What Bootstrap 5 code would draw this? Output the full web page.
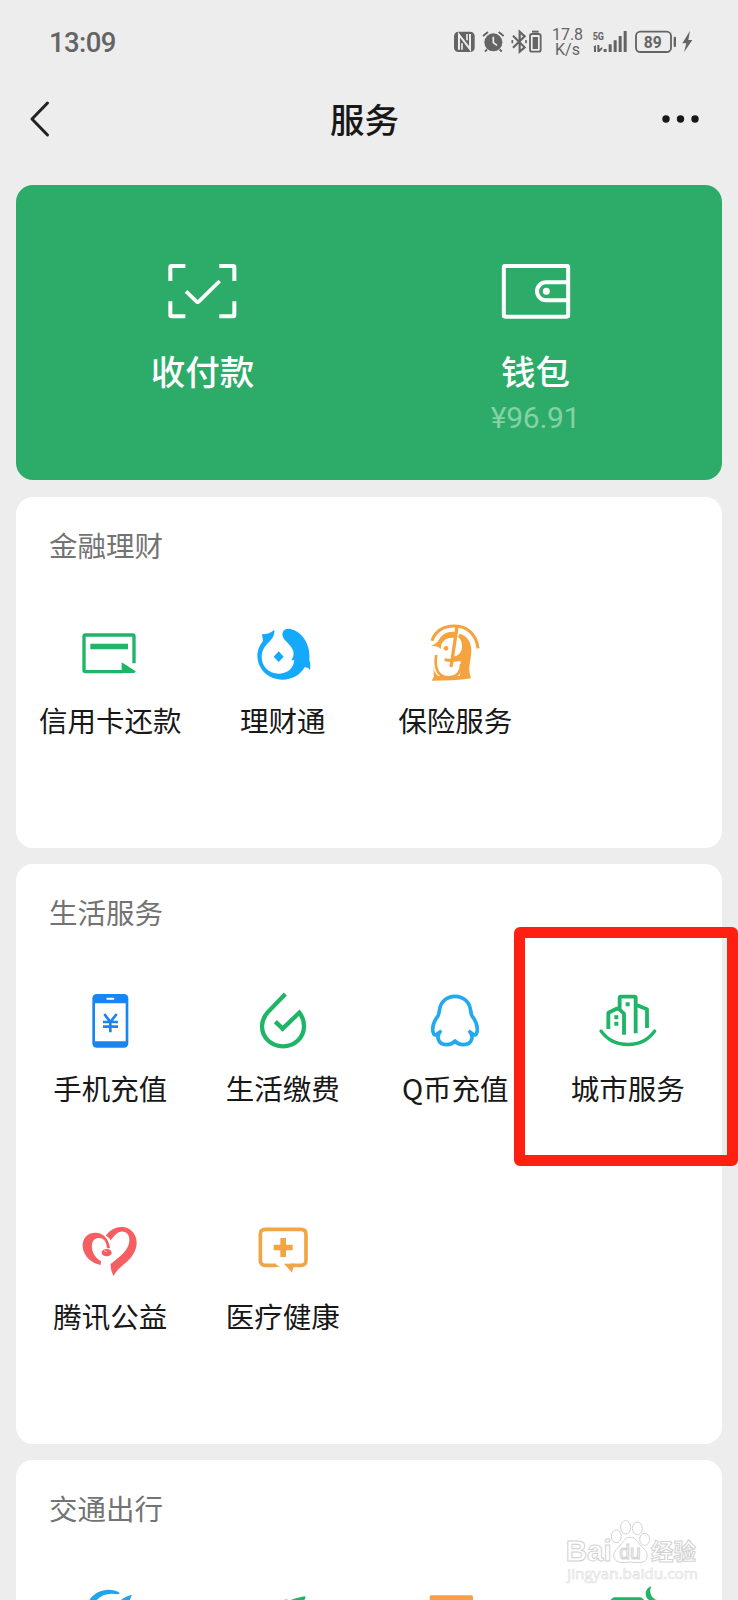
<!DOCTYPE html>
<html lang="zh-CN">
<head>
<meta charset="utf-8">
<meta name="viewport" content="width=device-width, initial-scale=1">
<title>服务</title>
<link href="https://cdn.jsdelivr.net/npm/bootstrap@5.3.0/dist/css/bootstrap.min.css" rel="stylesheet">
<style>
  html, body { height: 1600px; overflow: hidden; }
  body { background: #ededed; color: #181818; font-family: Roboto, "Noto Sans CJK SC", sans-serif; }
  svg { display: block; flex: none; }
  .status-bar { height: 84px; padding-left: 49px; color: #646464; }
  .clock { font-size: 27.5px; line-height: 84px; padding-top: 2px; width: 404px; letter-spacing: -.6px; }
  .net-speed { width: 33px; margin: 0 8px 0 9px; font-size: 16px; }
  .net-speed div { height: 15px; line-height: 15px; }
  .title-bar { height: 72px; padding: 0 38px 0 29px; }
  .title-bar h1 { font-size: 34.5px; line-height: 50px; font-weight: 500; padding-top: 1px; }
  .panel { border: 0; border-radius: 17px; margin: 0 16px 16px; }
  .pay-panel { height: 295px; margin-top: 29px; margin-bottom: 16.5px; background: #2dac69; color: #fff; padding: 79px 20px 0; }
  .cut-panel { height: 139.5px; overflow: hidden; }
  .pay-label { font-size: 34.5px; line-height: 50px; font-weight: 500; margin-top: 29px; }
  .amount { font-size: 30px; line-height: 36px; color: #84d1a6; margin-top: 2px; letter-spacing: -.3px; }
  .section-title { font-size: 28.5px; line-height: 42px; font-weight: 400; color: #737373; margin: 0; padding: 30px 33px 26px; }
  .tiles { padding: 0 8px 25px; }
  .tile { height: 228.5px; padding-top: 22.5px; }
  .tile-label { font-family: "Noto Sans CJK SC", sans-serif; font-size: 28.5px; line-height: 42px; margin-top: 10px; white-space: nowrap; }
  .highlight { left: 514px; top: 927px; width: 224px; height: 239px; border: 11.5px solid #ff2012; border-radius: 6px; }
  .watermark { left: 560px; top: 1515px; }
</style>
</head>
<body class="position-relative">

<header>
  <div class="status-bar d-flex align-items-center">
    <div class="clock fw-medium">13:09</div>
    <svg width="89" height="55" viewBox="39 0 267 165" fill="none" stroke="#646464">
      <rect x="42" y="50" width="62" height="61" rx="13" fill="#646464" stroke="none"/>
      <path d="M57 104V59L90 102V57" stroke="#ededed" stroke-width="6"/>
      <path d="M66 104V85M81 57V76" stroke="#ededed" stroke-width="5"/>
      <circle cx="160" cy="82" r="27" fill="#646464" stroke="none"/>
      <path d="M129 63l15-12M191 63l-15-12M141 103l-6 7M179 103l6 7" stroke-width="6"/>
      <path d="M160 65v18l11 8" stroke="#ededed" stroke-width="5"/>
      <path d="M219 62l35 35-15 13V50l15 14-35 34" stroke-width="6.500"/>
      <path d="M217 75v10M258 75v10" stroke-width="5"/>
      <rect x="270" y="57" width="32" height="53" rx="6" stroke-width="5.500"/>
      <path d="M276 50h20" stroke-width="6"/>
      <rect x="278" y="66" width="16" height="36" fill="#646464" stroke="none"/>
    </svg>
    <div class="net-speed text-center"><div>17.8</div><div>K/s</div></div>
    <svg width="35" height="55" viewBox="456 0 105 165" fill="#646464">
      <text x="458" y="76" font-family="Roboto" font-weight="700" font-size="34" textLength="34" lengthAdjust="spacingAndGlyphs">5G</text>
      <path d="M459 96l9-6v21h-6V97zM472 90h6v12l9-6v6l-9 9h-6z"/>
      <path d="M491 102h9v9h-9zM506 88h9v23h-9zM521 76h9v35h-9zM536 63h9v48h-9zM551 48h9v63h-9z"/>
    </svg>
    <svg class="ms-2" width="58" height="55" viewBox="583 0 174 165" fill="#646464">
      <rect x="586" y="50" width="105" height="61" rx="13" fill="none" stroke="#646464" stroke-width="5.500"/>
      <text x="636" y="98" text-anchor="middle" font-family="Roboto" font-weight="700" font-size="47">89</text>
      <rect x="699" y="65" width="7" height="31" rx="3"/>
      <path d="M748 47l-23 38h12l-7 27 25-37h-12z"/>
    </svg>
  </div>
  <nav class="title-bar d-flex align-items-center justify-content-between">
    <svg width="38" height="40" viewBox="0 0 38 40" fill="none" stroke="#222" stroke-width="3" stroke-linecap="round" stroke-linejoin="round"><path d="M18.500 3L3 19l15.500 16"/></svg>
    <h1 class="mb-0">服务</h1>
    <svg width="38" height="10" viewBox="0 0 38 10" fill="#181818"><circle cx="4" cy="4" r="3.700"/><circle cx="18.500" cy="4" r="3.700"/><circle cx="33" cy="4" r="3.700"/></svg>
  </nav>
</header>

<main>
  <section class="card panel pay-panel">
    <div class="row g-0 text-center">
      <div class="col-6 d-flex flex-column align-items-center">
        <svg width="70" height="55" viewBox="0 0 210 165" fill="none" stroke="#fff" stroke-width="12">
          <path d="M7 51V10q0-4 4-4h41M154 6h41q4 0 4 4v41M199 112v41q0 4-4 4h-41M52 157H11q-4 0-4-4v-41"/>
          <path d="M54 82l31 30q4 4 8 0l62-61" stroke-width="11"/>
        </svg>
        <div class="pay-label">收付款</div>
      </div>
      <div class="col-6 d-flex flex-column align-items-center">
        <svg width="70" height="55" viewBox="0 0 210 165" fill="none" stroke="#fff" stroke-width="12">
          <rect x="8.500" y="6" width="193" height="152" rx="4"/>
          <path d="M200 55h-65a27 27 0 0 0 0 54h65"/>
          <circle cx="136" cy="82" r="10.500" fill="#fff" stroke="none"/>
        </svg>
        <div class="pay-label">钱包</div>
        <div class="amount">¥96.91</div>
      </div>
    </div>
  </section>

  <section class="card panel">
    <h2 class="section-title">金融理财</h2>
    <div class="tiles row g-0">
      <div class="tile col-3 d-flex flex-column align-items-center">
        <svg width="72" height="72" viewBox="223 411 216 216" fill="#1fb566">
          <path d="M403 550V469q0-4-4-4H257q-4 0-4 4v102q0 4 4 4h112" fill="none" stroke="#1fb566" stroke-width="10"/>
          <path d="M272 491h113v17H272zM366 547l42 27q-1 5-6 5h-36z"/>
        </svg>
        <div class="tile-label">信用卡还款</div>
      </div>
      <div class="tile col-3 d-flex flex-column align-items-center">
        <svg width="72" height="72" viewBox="740 411 216 216" fill="#14a9fb">
          <path d="M822 449c-10 9-21 14-37 14l3 20c-11 14-17 28-17 43 0 42 33 73 75 73 29 0 53-13 67-37 7 0 12 2 16 8 2-11 1-22-2-30 5-50-26-91-63-94-12 0-20 9-17 22 4 16 23 22 31 43 4 12 1 20-5 31l9-3c-2 27-23 42-48 42-29 0-50-22-50-49 0-20 9-34 22-46 11-11 17-21 16-37z"/>
          <path d="M835 514l15 16-15 16-15-16z"/>
        </svg>
        <div class="tile-label">理财通</div>
      </div>
      <div class="tile col-3 d-flex flex-column align-items-center">
        <svg width="72" height="72" viewBox="2 0 216 216" fill="none" stroke="#f5a33f">
          <path d="M41 71c10-30 37-45 69-44 38 1 64 26 69 67" stroke-width="9.500"/>
          <path d="M38 86c11-3 19-9 25-19 9-16 26-25 47-22l-2 18c-14-3-25 1-32 9-7 8-9 15-8 24-8-7-17-10-30-10z" fill="#f5a33f" stroke="none"/>
          <path d="M124 50c25 7 35 28 35 51 0 22-9 46-5 68l4 15c-36 7-76 7-118 7l8-14h76c5-17 4-31 2-46-8 3-18 4-27 3l5-15c15-2 27-13 27-30 0-16-5-23-12-29z" fill="#f5a33f" stroke="none"/>
          <path d="M116 30L98 150" stroke-width="10"/>
          <path d="M45 144c1 26 14 38 34 39l-32 4z" fill="#f5a33f" stroke="none"/>
          <path d="M54 114c-6 32 0 65 35 67 25 0 39-14 39-40" stroke-width="8"/>
          <path d="M79 128l24 3" stroke-width="9"/>
          <circle cx="83" cy="94" r="7" fill="#f5a33f" stroke="none"/>
        </svg>
        <div class="tile-label">保险服务</div>
      </div>
    </div>
  </section>

  <section class="card panel">
    <h2 class="section-title">生活服务</h2>
    <div class="tiles row g-0">
      <div class="tile col-3 d-flex flex-column align-items-center">
        <svg width="72" height="72" viewBox="133 74 216 216">
          <rect x="188" y="101" width="108" height="161" rx="13" fill="#1a85ee"/>
          <path d="M196 129h92v114h-92z" fill="#fff"/>
          <rect x="230" y="112" width="24" height="6" rx="3" fill="#fff"/>
          <path d="M224 161l18 24 19-24M242 185v31M220 185h45M220 199h45" fill="none" stroke="#1a85ee" stroke-width="8"/>
        </svg>
        <div class="tile-label">手机充值</div>
      </div>
      <div class="tile col-3 d-flex flex-column align-items-center">
        <svg width="72" height="72" viewBox="650 74 216 216" fill="none" stroke="#1fb566" stroke-width="13">
          <path d="M765 101l-53 55c-11 13-17 25-17 41 0 35 28 61 63 61s63-26 63-61c0-16-5-29-14-40l-50 48-22-21"/>
        </svg>
        <div class="tile-label">生活缴费</div>
      </div>
      <div class="tile col-3 d-flex flex-column align-items-center">
        <svg width="72" height="72" viewBox="148 224 216 216" fill="none" stroke="#22a9ee" stroke-width="11" stroke-linejoin="round">
          <path d="M256 258c-27 0-45 19-47 44l-3 13c-13 17-19 35-16 50 2 9 6 11 12 7l8-6c-5 8-7 14-4 21 3 11 13 16 25 16 11 0 19-4 25-11 6 7 14 11 25 11 12 0 22-5 25-16 3-7 1-13-4-21l8 6c6 4 10 2 12-7 3-15-3-33-16-50l-3-13c-2-25-20-44-47-44z"/>
          <path d="M202 373l13-12M310 373l-13-12" stroke-width="9"/>
        </svg>
        <div class="tile-label">Q币充值</div>
      </div>
      <div class="tile col-3 d-flex flex-column align-items-center">
        <svg width="72" height="72" viewBox="665 224 216 216" fill="none" stroke="#1fb566" stroke-width="11.500" stroke-linejoin="round">
          <path d="M714 356v-49l25-12q4-1 8 2l14 13v63M748 296v-33q0-4 4-4h40q4 0 4 4v106M799 284l31 13v56"/>
          <path d="M692 362c39 54 123 54 161 0" stroke-linecap="round" stroke-width="10"/>
          <path d="M732 315h12v12h-12zM732 334h12v12h-12zM766 276h12v12h-12z" fill="#1fb566" stroke="none"/>
        </svg>
        <div class="tile-label">城市服务</div>
      </div>
      <div class="tile col-3 d-flex flex-column align-items-center">
        <svg width="72" height="72" viewBox="133 39 216 216" fill="#f65f61">
          <path d="M228 107c15-20 37-30 57-25 25 6 40 29 35 57-4 20-15 34-30 48-15 13-30 24-38 41-7-11-9-23-9-36 20-17 41-30 51-51 8-17 7-37-7-44-14-8-28 2-44 24-3-6-8-11-15-14z"/>
          <path d="M241 145c-2-28-21-48-45-47-22 0-39 18-37 42 3 28 25 49 54 55l1-11c-15-9-25-22-27-39-2-18 5-30 19-31 16-2 25 11 26 31z"/>
          <ellipse cx="231" cy="158" rx="15" ry="11"/>
          <path d="M223 152l9 3" stroke="#fff" stroke-width="2"/>
        </svg>
        <div class="tile-label">腾讯公益</div>
      </div>
      <div class="tile col-3 d-flex flex-column align-items-center">
        <svg width="72" height="72" viewBox="650 39 216 216" fill="#f2a544">
          <path d="M737 196h-32q-15 0-15-15v-78q0-15 15-15h107q15 0 15 15v78q0 15-15 15h-31" fill="none" stroke="#f2a544" stroke-width="11"/>
          <path d="M733 191l16 10h-16zM761 191h31l-7 27z"/>
          <path d="M750 114h17v20h20v17h-20v20h-17v-20h-20v-17h20z"/>
        </svg>
        <div class="tile-label">医疗健康</div>
      </div>
    </div>
  </section>

  <section class="card panel cut-panel rounded-bottom-0 mb-0">
    <h2 class="section-title">交通出行</h2>
    <div class="tiles row g-0">
      <div class="tile col-3 d-flex flex-column align-items-center">
        <svg width="72" height="72" viewBox="223 483 216 216" fill="#20a5ea">
          <path d="M266 546c19-37 65-46 95-27l-6 4c-29-6-53 1-69 23zM358 546c10-11 22-18 39-22l-9 22z"/>
        </svg>
      </div>
      <div class="tile col-3 d-flex flex-column align-items-center">
        <svg width="72" height="72" viewBox="740 483 216 216" fill="#1fb566">
          <path d="M840 546q13-11 26-6c10 1 15-6 49-11 2 6-3 11-9 17z"/>
        </svg>
      </div>
      <div class="tile col-3 d-flex flex-column align-items-center">
        <svg width="72" height="72" viewBox="178 483 216 216" fill="#f5a142">
          <rect x="210" y="526" width="130" height="120" rx="5"/>
        </svg>
      </div>
      <div class="tile col-3 d-flex flex-column align-items-center">
        <svg width="72" height="72" viewBox="695 483 216 216" fill="#1fb566">
          <rect x="750" y="532" width="102" height="100" rx="14"/>
          <path d="M873 499c-23 7-22 40 0 43l17-5c-18 0-25-23-17-38z"/>
        </svg>
      </div>
    </div>
  </section>
</main>

<div class="highlight position-absolute"></div>

<svg class="watermark position-absolute" width="146" height="72" viewBox="600 285 438 216" fill="#fff" stroke="#d2d2d2" stroke-width="3">
  <text x="617" y="424" font-family="Liberation Sans" font-weight="700" font-size="90" textLength="138" lengthAdjust="spacingAndGlyphs">Bai</text>
  <ellipse cx="769" cy="349" rx="15" ry="19"/><ellipse cx="797" cy="322" rx="15" ry="20"/><ellipse cx="832" cy="325" rx="15" ry="19"/><ellipse cx="854" cy="358" rx="15" ry="18"/>
  <path d="M811 352c18 0 22 16 35 29 13 12 18 22 14 34-6 17-29 13-49 11-20 2-41 5-48-11-5-12 1-23 13-34 14-13 17-29 35-29z"/>
  <text x="778" y="416" font-family="Liberation Sans" font-size="58" textLength="64" lengthAdjust="spacingAndGlyphs">du</text>
  <text x="873" y="419" font-family="Noto Sans CJK SC" font-weight="700" font-size="68" textLength="135" lengthAdjust="spacingAndGlyphs">经验</text>
  <text x="622" y="478" font-family="Open Sans" font-size="43" textLength="392" lengthAdjust="spacingAndGlyphs" stroke-width="1.800" stroke="#dedede">jingyan.baidu.com</text>
</svg>

<script src="https://cdn.jsdelivr.net/npm/bootstrap@5.3.0/dist/js/bootstrap.bundle.min.js"></script>
</body>
</html>
